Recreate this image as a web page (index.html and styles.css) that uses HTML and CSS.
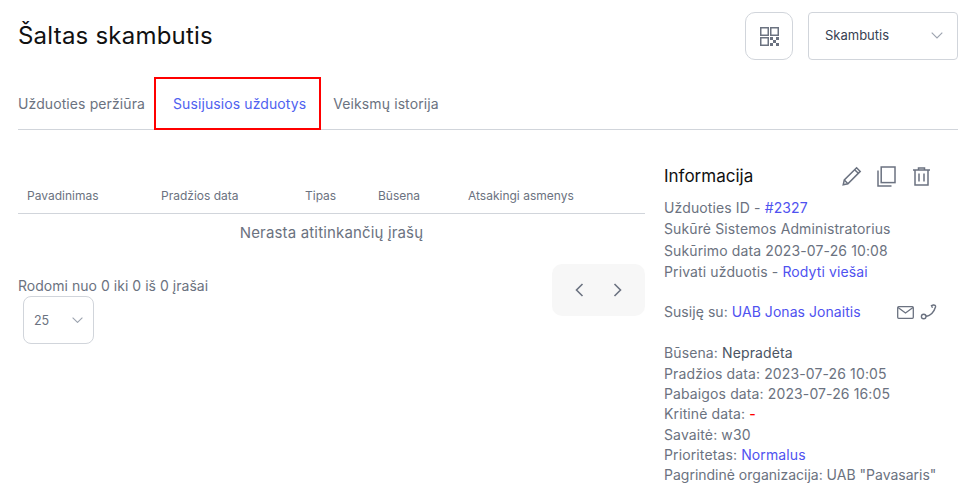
FILE: index.html
```html
<!DOCTYPE html>
<html lang="lt">
<head>
<meta charset="utf-8">
<title>Šaltas skambutis</title>
<link rel="stylesheet" href="styles.css">
</head>
<body>
<div class="page">
  <header class="head">
    <h1 class="title">Šaltas skambutis</h1>
    <div class="head-actions">
      <button class="qr-btn" type="button" aria-label="QR">
        <svg width="19" height="19" viewBox="0 0 19 19" fill="none" stroke="#6b7280" stroke-width="1.5"><rect x=".75" y=".75" width="7.5" height="7.5"/><rect x="10.750" y=".75" width="7.5" height="7.5"/><rect x=".75" y="10.750" width="7.500" height="7.500"/><path d="M10 10h3v3h-3zM16 10h3v3h-3zM13 13h3v3h-3zM10 16h3v3h-3zM16 16h3v3h-3z" fill="#6b7280" stroke="none"/></svg>
      </button>
      <div class="select select-type">
        <span>Skambutis</span>
        <svg class="chev" width="12" height="7" viewBox="0 0 12 7" fill="none" stroke="#9ca3af" stroke-width="1.1"><path d="M.7.7 6 6l5.3-5.3"/></svg>
      </div>
    </div>
  </header>
  <nav class="tabs">
    <a class="tab">Užduoties peržiūra</a>
    <a class="tab tab-active">Susijusios užduotys</a>
    <a class="tab">Veiksmų istorija</a>
  </nav>
  <main class="body">
    <section class="left">
      <div class="thead">
        <span class="th th-name">Pavadinimas</span>
        <span class="th th-date">Pradžios data</span>
        <span class="th th-type">Tipas</span>
        <span class="th th-status">Būsena</span>
        <span class="th">Atsakingi asmenys</span>
      </div>
      <div class="empty">Nerasta atitinkančių įrašų</div>
      <div class="foot">
        <div class="foot-info">
          <div class="count">Rodomi nuo 0 iki 0 iš 0 įrašai</div>
          <div class="select select-size">
            <span>25</span>
            <svg class="chev" width="11" height="6" viewBox="0 0 11 6" fill="none" stroke="#9ca3af" stroke-width="1.1"><path d="M.6.6l4.9 4.8L10.4.6"/></svg>
          </div>
        </div>
        <div class="pager">
          <svg width="9" height="14" viewBox="0 0 9 14" fill="none" stroke="#6b7280" stroke-width="1.6"><path d="M7.5 1 1.500 7l6 6"/></svg>
          <svg width="9" height="14" viewBox="0 0 9 14" fill="none" stroke="#6b7280" stroke-width="1.6"><path d="m1.500 1 6 6-6 6"/></svg>
        </div>
      </div>
    </section>
    <aside class="info">
      <div class="info-head">
        <h2 class="info-title">Informacija</h2>
        <div class="info-icons">
          <svg class="icon-edit" width="20" height="20" viewBox="0 0 20 20" fill="none" stroke="#6b7280" stroke-width="1.5"><path d="M1.200 18.800 2.300 14 14.600 1.800l3.600 3.600L5.900 17.700z"/><path d="M2.300 14l3.600 3.700M12.700 3.700l3.600 3.600"/></svg>
          <svg width="19" height="21" viewBox="0 0 19 21" fill="none" stroke="#6b7280" stroke-width="1.500"><rect x="4.200" y="1" width="13.800" height="15.600"/><path d="M1 4.500V20h13.500"/></svg>
          <svg width="17" height="19" viewBox="0 0 17 19" fill="none" stroke="#6b7280" stroke-width="1.500"><path d="M0 3h17M5.500 3V1h6v2M2 3v15h13V3M6 6.500v8M11 6.500v8"/></svg>
        </div>
      </div>
      <div class="info-group info-meta">
        <p class="line">Užduoties ID - <a class="link">#2327</a></p>
        <p class="line">Sukūrė Sistemos Administratorius</p>
        <p class="line">Sukūrimo data 2023-07-26 10:08</p>
        <p class="line">Privati užduotis - <a class="link">Rodyti viešai</a></p>
      </div>
      <div class="related">
        <p class="line line-related">Susiję su: <a class="link">UAB Jonas Jonaitis</a></p>
        <div class="related-icons">
          <svg width="17" height="13" viewBox="0 0 17 13" fill="none" stroke="#6b7280" stroke-width="1.300"><rect x=".7" y=".7" width="15.600" height="11.600" rx="1"/><path d="m1 1.500 7.500 5.500L16 1.500"/></svg>
          <svg width="17" height="16" viewBox="0 0 17 16" fill="none" stroke="#6b7280" stroke-width="1.400"><path d="M6 12.500a2.300 2.300 0 1 1-4.600 0 2.300 2.300 0 0 1 4.600 0zM6 12.500C10.500 11.500 14 8 15.500 3 15.900 1.500 14.500.700 13.300 1L11.500 1.700 12.500 3.800"/></svg>
        </div>
      </div>
      <div class="info-group">
        <p class="line">Būsena: <span class="strong">Nepradėta</span></p>
        <p class="line">Pradžios data: 2023-07-26 10:05</p>
        <p class="line">Pabaigos data: 2023-07-26 16:05</p>
        <p class="line">Kritinė data: <span class="red">-</span></p>
        <p class="line">Savaitė: w30</p>
        <p class="line">Prioritetas: <a class="link">Normalus</a></p>
        <p class="line line-tight">Pagrindinė organizacija: UAB "Pavasaris"</p>
      </div>
    </aside>
  </main>
</div>
</body>
</html>
```

FILE: styles.css
```css
* { box-sizing: border-box; }
html, body { margin: 0; background: #fff; }
body { font-family: Inter, "Liberation Sans", sans-serif; color: #6b7280; overflow: hidden; height: 499px; }
.page { padding: 12px 14px 0 18px; }

.head { display: flex; justify-content: space-between; align-items: center; height: 48px; }
.title { margin: 0 0 2px; font-size: 24px; font-weight: 400; letter-spacing: .22px; color: #111; line-height: 47px; }
.head-actions { display: flex; gap: 15px; }
.qr-btn { width: 48px; height: 48px; border: 1px solid #d1d5db; border-radius: 10px; background: #fff; padding: 0; display: flex; align-items: center; justify-content: center; }
.select { display: flex; align-items: center; justify-content: space-between; background: #fff; border: 1px solid #d1d5db; }
.select-type { width: 150px; height: 48px; border-radius: 4px; padding: 0 14px 2px 16px; font-size: 13px; color: #374151; }
.select-size { width: 71px; height: 48px; border-radius: 8px; padding: 0 10px 0 10px; margin-left: 5px; font-size: 12.500px; }

.tabs { display: flex; margin-top: 17px; height: 53px; border-bottom: 1px solid #d1d5db; align-items: stretch; }
.tab { display: flex; align-items: center; font-size: 14px; font-weight: 400; letter-spacing: .1px; color: #6b7280; }
.tab-active { color: #4f62f0; border: 2px solid #f00; margin: 0 12px 0 9px; padding: 0 13px 0 17px; height: 53px; }

.body { display: flex; gap: 19px; margin-top: 36px; }
.left { width: 627px; flex: none; }
.thead { display: flex; height: 34px; align-items: center; padding: 0 0 2px 9px; border-bottom: 1px solid #d1d5db; margin-top: 14px; }
.th { font-size: 12px; font-weight: 400; color: #6b7280; }
.th-name { width: 134px; }
.th-date { width: 144px; }
.th-type { width: 73px; }
.th-status { width: 90px; }
.empty { text-align: center; font-size: 15px; letter-spacing: .16px; line-height: 18px; margin-top: 10px; }
.foot { display: flex; justify-content: space-between; align-items: flex-start; margin-top: 22px; }
.foot-info { padding-top: 13px; }
.count { font-size: 14px; letter-spacing: .03px; line-height: 18px; margin-bottom: 1px; }
.pager { width: 93px; height: 52px; background: #f7f7f7; border-radius: 10px; display: flex; align-items: center; justify-content: center; gap: 29px; }

.info { flex: 1; }
.info-head { display: flex; justify-content: space-between; align-items: center; height: 24px; padding-right: 28px; margin-top: -2px; }
.info-title { margin: 0; font-size: 17px; font-weight: 400; color: #111; }
.info-icons { display: flex; gap: 17px; align-items: center; }
.icon-edit { margin-right: -2px; }
.info-group { margin-top: 9px; }
.line { margin: 0; font-size: 14px; line-height: 20.300px; letter-spacing: .12px; }
.line-tight { letter-spacing: 0; }
.line-related { letter-spacing: .05px; }
.info-meta .line { line-height: 21.300px; }
.link { color: #4f52f0; }
.strong { color: #4b5563; font-weight: 400; }
.red { color: #f00; font-weight: 500; }
.related { display: flex; justify-content: space-between; align-items: center; margin: 20px 21px 0 0; }
.related-icons { display: flex; gap: 6px; align-items: center; }
.related + .info-group { margin-top: 21px; }
```
